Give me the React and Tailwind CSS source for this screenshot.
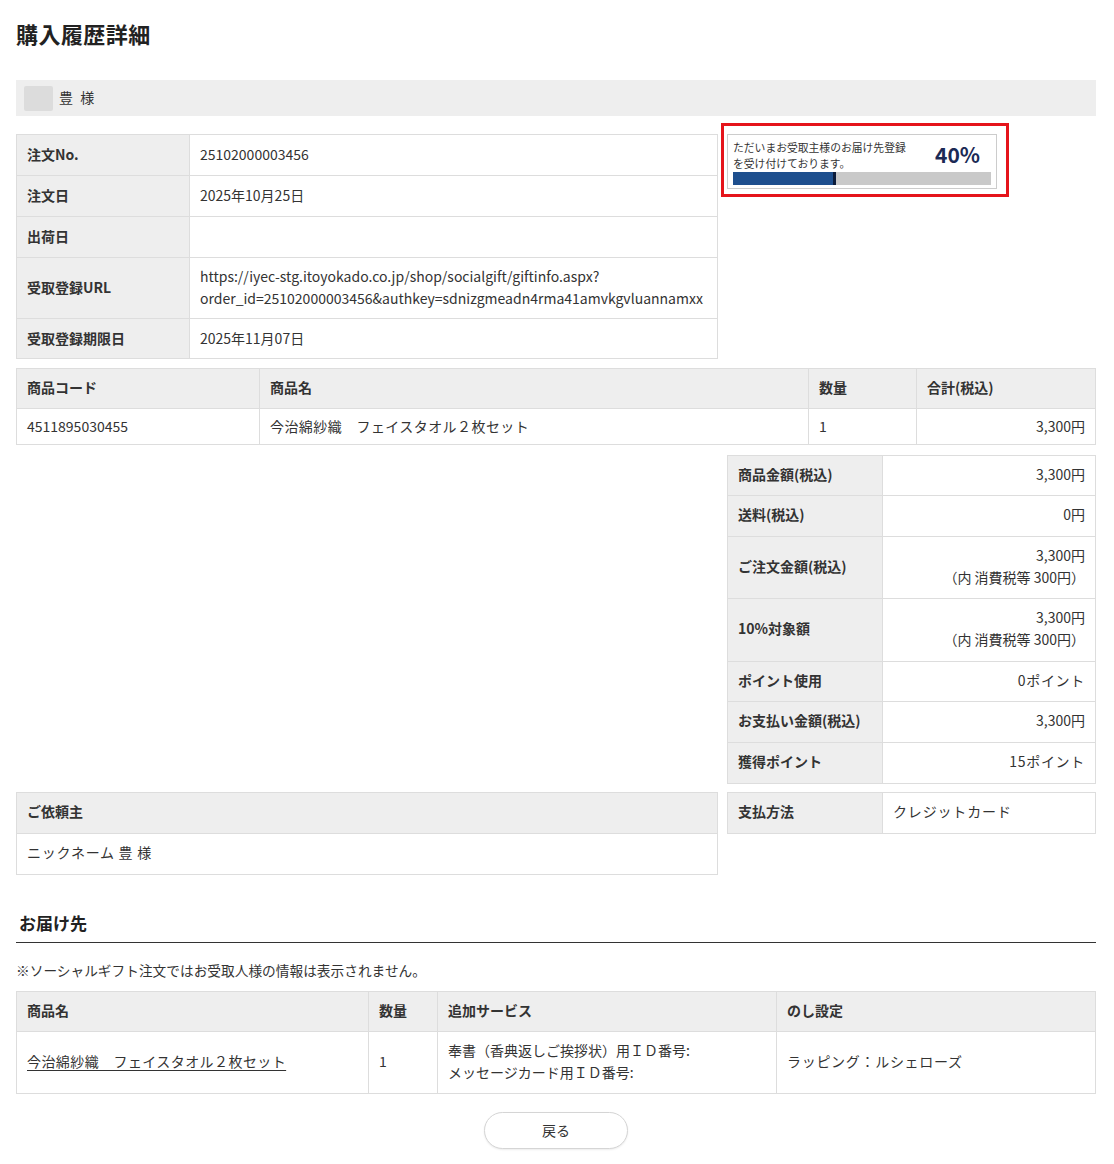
import React from "react";

const font = { fontFamily: '"Noto Sans CJK JP", "Noto Sans", sans-serif' };

function Th({ children, className = "" }) {
  return (
    <th className={`border border-[#dddddd] bg-[#eeeeee] text-left font-bold px-[10px] ${className}`}>
      {children}
    </th>
  );
}
function Td({ children, className = "" }) {
  return (
    <td className={`border border-[#dddddd] bg-white px-[10px] ${className}`}>{children}</td>
  );
}

export default function App() {
  return (
    <div className="bg-white text-[#333333] text-[14px] min-h-[1164px]" style={font}>
      <div className="w-[1080px] ml-[16px] pb-[14px]">
        <h1 className="pt-[18px] text-[22px] leading-[30px] font-bold text-[#222222] tracking-[0.02em]">購入履歴詳細</h1>

        <div className="mt-[32px] h-[36px] bg-[#eeeeee] flex items-center pl-[8px]">
          <div className="w-[29px] h-[25px] bg-[#dcdcdc] rounded-[2px] blur-[0.5px]" />
          <span className="ml-[6px] -mt-[2px] tracking-[0.15em]">豊 様</span>
        </div>

        {/* Order info + progress */}
        <div className="mt-[18px] flex gap-[9px] items-start">
          <table className="w-[702px] table-fixed border-collapse leading-[22px]">
            <colgroup>
              <col className="w-[173px]" />
              <col />
            </colgroup>
            <tbody>
              <tr>
                <Th className="pt-[8px] pb-[10px]">注文No.</Th>
                <Td className="pt-[8px] pb-[10px]">25102000003456</Td>
              </tr>
              <tr>
                <Th className="pt-[8px] pb-[10px]">注文日</Th>
                <Td className="pt-[8px] pb-[10px]">2025年10月25日</Td>
              </tr>
              <tr>
                <Th className="pt-[8px] pb-[10px]">出荷日</Th>
                <Td className="pt-[8px] pb-[10px]"></Td>
              </tr>
              <tr>
                <Th className="pt-[7px] pb-[9px]">受取登録URL</Th>
                <Td className="pt-[7px] pb-[9px]">
                  https://iyec-stg.itoyokado.co.jp/shop/socialgift/giftinfo.aspx?
                  <br />
                  order_id=25102000003456&amp;authkey=sdnizgmeadn4rma41amvkgvluannamxx
                </Td>
              </tr>
              <tr>
                <Th className="pt-[8px] pb-[9px]">受取登録期限日</Th>
                <Td className="pt-[8px] pb-[9px]">2025年11月07日</Td>
              </tr>
            </tbody>
          </table>

          <div className="-ml-[6px] -mt-[11px] w-[288px] h-[74px] border-[3px] border-[#e5141b] pl-[3px] pr-[9px] pt-[8px]">
            <div className="h-[55px] border border-[#cccccc] bg-white px-[5px] pt-[4px]">
              <div className="flex items-start">
                <p className="w-[180px] text-[10.8px] leading-[16px] text-[#333333]">
                  ただいまお受取主様のお届け先登録を受け付けております。
                </p>
                <span className="ml-[22px] mt-[3px] text-[21px] leading-[24px] font-bold text-[#1b2a55]">40%</span>
              </div>
              <div className="mt-[1px] h-[13px] bg-[#c9c9c9] flex">
                <div className="w-[40%] h-full bg-[#1e4f8e] border-r-[3px] border-[#0c1c3a]" />
              </div>
            </div>
          </div>
        </div>

        {/* Product table */}
        <table className="mt-[9px] w-full table-fixed border-collapse leading-[21px]">
          <colgroup>
            <col className="w-[243px]" />
            <col className="w-[549px]" />
            <col className="w-[108px]" />
            <col />
          </colgroup>
          <thead>
            <tr>
              <Th className="pt-[8px] pb-[10px]">商品コード</Th>
              <Th className="pt-[8px] pb-[10px]">商品名</Th>
              <Th className="pt-[8px] pb-[10px]">数量</Th>
              <Th className="pt-[8px] pb-[10px]">合計(税込)</Th>
            </tr>
          </thead>
          <tbody>
            <tr>
              <Td className="py-[7px]">4511895030455</Td>
              <Td className="py-[7px] tracking-[0.03em]">今治綿紗織　フェイスタオル２枚セット</Td>
              <Td className="py-[7px]">1</Td>
              <Td className="py-[7px] text-right">3,300円</Td>
            </tr>
          </tbody>
        </table>

        {/* Summary */}
        <div className="mt-[10px] flex justify-end">
          <table className="w-[369px] table-fixed border-collapse leading-[22px]">
            <colgroup>
              <col className="w-[155px]" />
              <col />
            </colgroup>
            <tbody>
              <tr>
                <Th className="pt-[7px] pb-[10px]">商品金額(税込)</Th>
                <Td className="pt-[7px] pb-[10px] text-right">3,300円</Td>
              </tr>
              <tr>
                <Th className="pt-[7px] pb-[11px]">送料(税込)</Th>
                <Td className="pt-[7px] pb-[11px] text-right">0円</Td>
              </tr>
              <tr>
                <Th className="pt-[7px] pb-[10px]">ご注文金額(税込)</Th>
                <Td className="pt-[7px] pb-[10px] text-right">
                  3,300円
                  <br />
                  （内 消費税等 300円）
                </Td>
              </tr>
              <tr>
                <Th className="pt-[7px] pb-[11px]">10%対象額</Th>
                <Td className="pt-[7px] pb-[11px] text-right">
                  3,300円
                  <br />
                  （内 消費税等 300円）
                </Td>
              </tr>
              <tr>
                <Th className="pt-[7px] pb-[10px]">ポイント使用</Th>
                <Td className="pt-[7px] pb-[10px] text-right tracking-[0.05em]">0ポイント</Td>
              </tr>
              <tr>
                <Th className="pt-[7px] pb-[11px]">お支払い金額(税込)</Th>
                <Td className="pt-[7px] pb-[11px] text-right">3,300円</Td>
              </tr>
              <tr>
                <Th className="pt-[7px] pb-[11px]">獲得ポイント</Th>
                <Td className="pt-[7px] pb-[11px] text-right tracking-[0.05em]">15ポイント</Td>
              </tr>
            </tbody>
          </table>
        </div>

        {/* Requester + payment */}
        <div className="mt-[8px] flex gap-[9px] items-start">
          <table className="w-[702px] border-collapse leading-[22px]">
            <thead>
              <tr>
                <Th className="pt-[7px] pb-[11px]">ご依頼主</Th>
              </tr>
            </thead>
            <tbody>
              <tr>
                <Td className="pt-[7px] pb-[11px] tracking-[0.05em]">ニックネーム 豊 様</Td>
              </tr>
            </tbody>
          </table>
          <table className="w-[369px] table-fixed border-collapse leading-[22px]">
            <colgroup>
              <col className="w-[155px]" />
              <col />
            </colgroup>
            <tbody>
              <tr>
                <Th className="pt-[7px] pb-[11px]">支払方法</Th>
                <Td className="pt-[7px] pb-[11px] tracking-[0.06em]">クレジットカード</Td>
              </tr>
            </tbody>
          </table>
        </div>

        {/* Delivery */}
        <h2 className="mt-[36px] pl-[3px] pb-[5px] text-[17px] leading-[26px] font-bold text-[#222222] border-b border-[#333333]">
          <span className="relative -top-[1px]">お届け先</span>
        </h2>
        <p className="mt-[17px] text-[13.7px] leading-[20px]">※ソーシャルギフト注文ではお受取人様の情報は表示されません。</p>

        <table className="mt-[11px] w-full table-fixed border-collapse leading-[22px]">
          <colgroup>
            <col className="w-[352px]" />
            <col className="w-[69px]" />
            <col className="w-[339px]" />
            <col />
          </colgroup>
          <thead>
            <tr>
              <Th className="pt-[7px] pb-[10px]">商品名</Th>
              <Th className="pt-[7px] pb-[10px]">数量</Th>
              <Th className="pt-[7px] pb-[10px]">追加サービス</Th>
              <Th className="pt-[7px] pb-[10px]">のし設定</Th>
            </tr>
          </thead>
          <tbody>
            <tr>
              <Td className="pt-[7px] pb-[10px]">
                <a href="#" className="underline underline-offset-[3px] tracking-[0.03em] text-[#333333]">
                  今治綿紗織　フェイスタオル２枚セット
                </a>
              </Td>
              <Td className="pt-[7px] pb-[10px]">1</Td>
              <Td className="pt-[7px] pb-[10px]">
                奉書（香典返しご挨拶状）用ＩＤ番号:
                <br />
                メッセージカード用ＩＤ番号:
              </Td>
              <Td className="pt-[7px] pb-[10px] tracking-[0.05em]">ラッピング：ルシェローズ</Td>
            </tr>
          </tbody>
        </table>

        <div className="mt-[18px] flex justify-center">
          <button className="w-[144px] h-[37px] rounded-full border border-[#d5d5d5] bg-white text-[14px] text-[#333333] shadow-[0_1px_2px_rgba(0,0,0,0.08)]">
            戻る
          </button>
        </div>
      </div>
    </div>
  );
}
